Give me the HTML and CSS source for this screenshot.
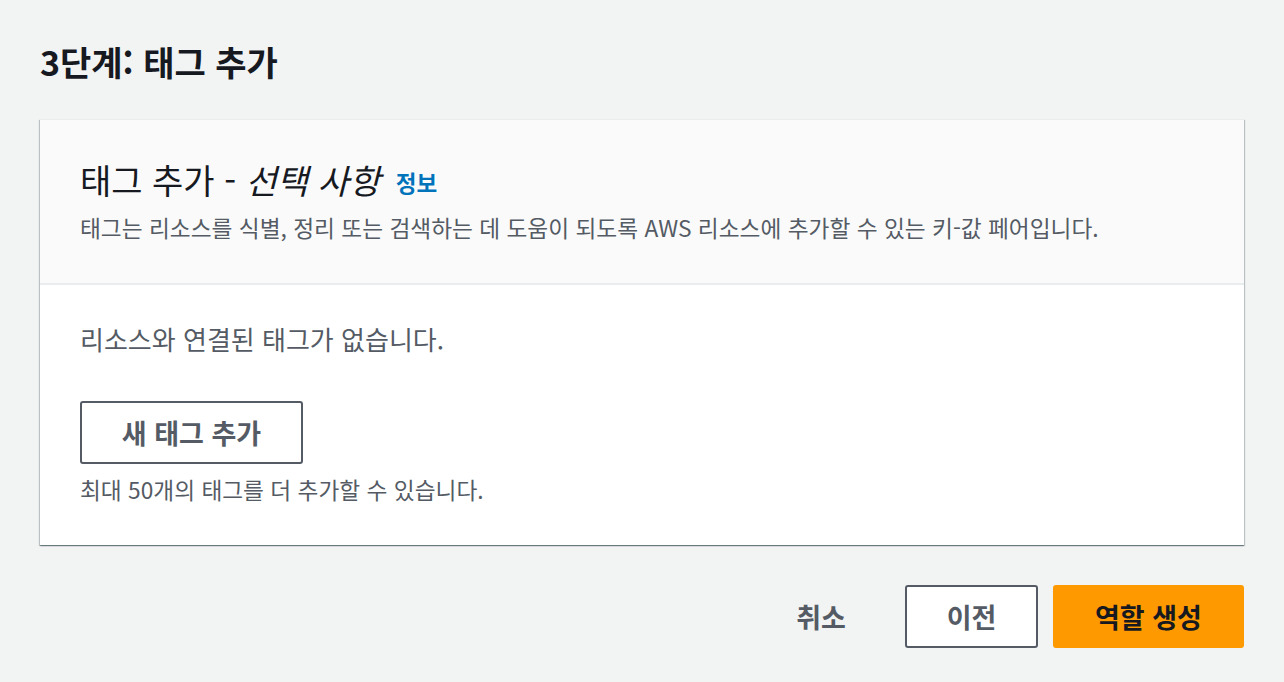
FILE: index.html
```html
<!DOCTYPE html>
<html lang="ko">
<head>
<meta charset="utf-8">
<link rel="stylesheet" href="styles.css">
</head>
<body>
<main class="page">
  <h1 class="page-title">3단계: 태그 추가</h1>
  <section class="card">
    <header class="card-header">
      <h2 class="card-title">태그 추가 - <i class="optional">선택 사항</i> <a class="info" href="#">정보</a></h2>
      <p class="card-desc">태그는 리소스를 식별, 정리 또는 검색하는 데 도움이 되도록 AWS 리소스에 추가할 수 있는 키-값 페어입니다.</p>
    </header>
    <div class="card-body">
      <p class="empty">리소스와 연결된 태그가 없습니다.</p>
      <button class="btn btn-normal btn-add" type="button">새 태그 추가</button>
      <p class="hint">최대 50개의 태그를 더 추가할 수 있습니다.</p>
    </div>
  </section>
  <div class="actions">
    <button class="btn btn-link" type="button">취소</button>
    <button class="btn btn-normal btn-prev" type="button">이전</button>
    <button class="btn btn-primary" type="button">역할 생성</button>
  </div>
</main>
</body>
</html>
```

FILE: styles.css
```css
* { box-sizing: border-box; }
html, body { margin: 0; padding: 0; }
body {
  background: #f2f3f3;
  font-family: "Open Sans", "Noto Sans CJK KR", sans-serif;
  color: #16191f;
  width: 1284px;
  height: 682px;
  overflow: hidden;
}
.page {
  padding: 38px 40px 0 40px;
  display: flex;
  flex-direction: column;
}
.page-title {
  margin: 0;
  font-size: 34px;
  line-height: 48px;
  font-weight: 700;
  font-family: "Noto Sans CJK KR", sans-serif;
  color: #16191f;
}
.card {
  margin-top: 33px;
  background: #fff;
  box-shadow: 0 1px 1px 0 rgba(0,28,36,.35), 1px 1px 1px 0 rgba(0,28,36,.18), -1px 1px 1px 0 rgba(0,28,36,.18);
  border-top: 1px solid #eaeded;
}
.card-header {
  background: #fafafa;
  border-bottom: 2px solid #eaeded;
  padding: 38px 40px 40px 40px;
}
.card-title {
  margin: 0;
  font-family: "Noto Sans CJK KR", sans-serif;
  font-size: 34px;
  line-height: 44px;
  font-weight: 400;
  color: #16191f;
}
.optional { font-style: italic; }
.info {
  font-size: 22.5px;
  font-weight: 700;
  color: #0073bb;
  text-decoration: none;
  margin-left: 6px;
  vertical-align: 2px;
}
.card-desc {
  margin: 9px 0 0 0;
  font-family: "Noto Sans CJK KR", sans-serif;
  font-size: 22.7px;
  line-height: 30px;
  color: #545b64;
}
.card-body {
  padding: 36px 40px 40px 40px;
  display: flex;
  flex-direction: column;
  align-items: flex-start;
}
.empty {
  margin: 0;
  font-family: "Noto Sans CJK KR", sans-serif;
  font-size: 26px;
  line-height: 36px;
  color: #545b64;
}
.btn {
  font-family: "Noto Sans CJK KR", sans-serif;
  font-weight: 700;
  font-size: 27px;
  border-radius: 3px;
  cursor: pointer;
  padding: 0;
}
.btn-normal {
  background: #fff;
  border: 2px solid #545b64;
  color: #545b64;
  height: 63px;
}
.btn-add {
  margin-top: 44px;
  width: 223px;
}
.hint {
  margin: 11px 0 0 0;
  font-family: "Noto Sans CJK KR", sans-serif;
  font-size: 22.7px;
  line-height: 30px;
  color: #545b64;
}
.actions {
  margin-top: 40px;
  display: flex;
  justify-content: flex-end;
  align-items: center;
  gap: 15px;
}
.btn-link {
  background: transparent;
  border: none;
  color: #545b64;
  height: 63px;
  width: 110px;
}
.btn-prev { width: 133px; margin-left: 14px; }
.btn-primary {
  background: #ff9900;
  border: 2px solid #ff9900;
  color: #16191f;
  height: 63px;
  width: 191px;
}
```
